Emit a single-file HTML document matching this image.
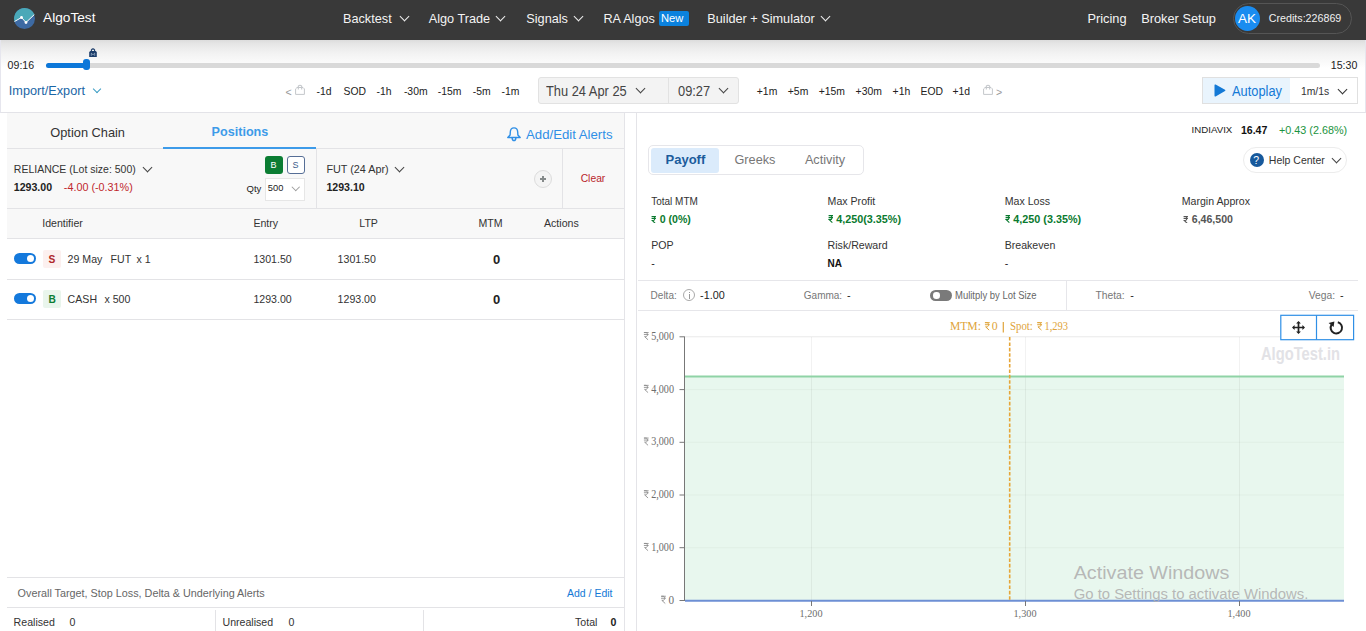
<!DOCTYPE html>
<html><head><meta charset="utf-8">
<style>
*{box-sizing:border-box;margin:0;padding:0}
html,body{width:1366px;height:631px;overflow:hidden;background:#fff;font-family:"Liberation Sans",sans-serif;color:#222}
.t{position:absolute;white-space:nowrap;line-height:1}
.b{position:absolute}
#hdr{position:absolute;left:0;top:0;width:1366px;height:40px;background:#393939}
.nav{font-size:12.7px;color:#f4f4f4}
.ch{position:absolute;width:7px;height:7px;border-right:1.4px solid currentColor;border-bottom:1.4px solid currentColor;transform:rotate(45deg)}
.s{font-size:10.6px}
.rp{display:inline-block;width:.52em;height:.72em;vertical-align:baseline;margin-right:0}
</style></head><body>
<!-- HEADER -->
<div id="hdr">
  <svg class="b" style="left:14px;top:8px" width="21" height="21" viewBox="0 0 21 21">
    <circle cx="10.5" cy="10.5" r="10.5" fill="#3d6aa3"/>
    <path d="M10.5 0 A10.5 10.5 0 0 1 20.3 6.6 L12 14.5 L7.5 9.5 L0.5 13.5 A10.5 10.5 0 0 1 10.5 0Z" fill="#4aa8b8"/>
    <polyline points="0.5,13.5 7.5,9.5 12,14.5 20.3,6.6" fill="none" stroke="#fff" stroke-width="1"/>
    <circle cx="7.5" cy="9.5" r="1.4" fill="#fff"/><circle cx="12" cy="14.5" r="1.4" fill="#fff"/>
  </svg>
  <div class="t" style="left:43px;top:10.7px;font-size:13.7px;color:#fff">AlgoTest</div>
  <div class="t nav" style="left:343px;top:13px">Backtest</div><div class="ch" style="left:400.5px;top:12.5px;color:#eee"></div>
  <div class="t nav" style="left:428.7px;top:13px">Algo Trade</div><div class="ch" style="left:497px;top:12.5px;color:#eee"></div>
  <div class="t nav" style="left:526.3px;top:13px">Signals</div><div class="ch" style="left:574.5px;top:12.5px;color:#eee"></div>
  <div class="t nav" style="left:603.4px;top:13px">RA Algos</div>
  <div class="b" style="left:659px;top:11px;width:30px;height:15px;background:#0b82de;border-radius:2px"></div>
  <div class="t" style="left:661px;top:12.6px;font-size:11.2px;color:#fff">New</div>
  <div class="t nav" style="left:707.3px;top:13px">Builder + Simulator</div><div class="ch" style="left:822px;top:12.5px;color:#eee"></div>
  <div class="t nav" style="left:1087.4px;top:12.6px;font-size:12.8px">Pricing</div>
  <div class="t nav" style="left:1141.2px;top:12.6px;font-size:12.8px">Broker Setup</div>
  <div class="b" style="left:1232.5px;top:3px;width:119px;height:31px;border:1px solid #555;border-radius:16px"></div>
  <div class="b" style="left:1234.5px;top:6px;width:25px;height:25px;background:#1a8cf0;border-radius:50%"></div>
  <div class="t" style="left:1238px;top:12.2px;font-size:13.5px;color:#fff">AK</div>
  <div class="t" style="left:1268.8px;top:12.8px;font-size:10.7px;color:#f0f0f0">Credits:226869</div>
</div>

<!-- TOP CONTROL PANEL -->
<div class="b" style="left:0;top:40px;width:1366px;height:73px;border-left:1px solid #e6e6ee;border-right:1px solid #e6e6ee;border-bottom:1px solid #e3e3e8;background:linear-gradient(#dcdcdc 0px,#e6e6e6 4px,#ededed 9px,#f3f3f3 14px,#f8f8f8 20px,#fcfcfc 25px,#fff 28px)"></div>
<div class="t s" style="left:7.6px;top:59.8px">09:16</div>
<div class="b" style="left:46px;top:62.7px;width:1274px;height:5px;background:#d9d9d9;border-radius:3px"></div>
<div class="b" style="left:46px;top:62.7px;width:40px;height:5px;background:#0c77d9;border-radius:3px"></div>
<div class="b" style="left:82.6px;top:59px;width:7.4px;height:11px;background:#0c77d9;border-radius:3px"></div>
<svg class="b" style="left:89px;top:47.6px" width="8" height="9" viewBox="0 0 8 9"><path d="M0.2 9V4L1.4 3H6.6L7.8 4V9Z" fill="#1c3d6a"/><path d="M2.4 3.4V1.8Q4 0 5.6 1.8V3.4" fill="none" stroke="#1c3d6a" stroke-width="1.1"/><path d="M2.3 7.8V5.2L4 6.8 5.7 5.2V7.8" fill="none" stroke="#a9bcd0" stroke-width=".7"/></svg>
<div class="t s" style="left:1330.8px;top:59.9px">15:30</div>

<div class="t" style="left:8.8px;top:85px;font-size:12.7px;color:#1a66a6">Import/Export</div>
<div class="ch" style="left:94px;top:85.5px;width:6px;height:6px;border-width:0 1.1px 1.1px 0;color:#3b9cc4"></div>

<div class="t s" style="left:285.5px;top:86.8px;color:#999">&lt;</div>
<svg class="b" style="left:295px;top:84.2px" width="10" height="11" viewBox="0 0 10 11"><path d="M0.6 10.4V4.9L2 3.5H8L9.4 4.9V10.4Z" fill="none" stroke="#c4c7cb" stroke-width="1"/><path d="M3.3 5.4V2.2Q5 0.3 6.7 2.2V5.4" fill="none" stroke="#c4c7cb" stroke-width="1.1"/></svg>
<div class="t" style="left:316.6px;top:86.8px;font-size:10.4px">-1d</div>
<div class="t" style="left:343.5px;top:86.8px;font-size:10.4px">SOD</div>
<div class="t" style="left:376.6px;top:86.8px;font-size:10.4px">-1h</div>
<div class="t" style="left:403.9px;top:86.8px;font-size:10.4px">-30m</div>
<div class="t" style="left:437.8px;top:86.8px;font-size:10.4px">-15m</div>
<div class="t" style="left:472.7px;top:86.8px;font-size:10.4px">-5m</div>
<div class="t" style="left:501.5px;top:86.8px;font-size:10.4px">-1m</div>

<div class="b" style="left:538px;top:77px;width:201px;height:27px;background:#f3f3f3;border:1px solid #e2e2e2;border-radius:3px"></div>
<div class="b" style="left:667.5px;top:78px;width:1px;height:25px;background:#e2e2e2"></div>
<div class="t" style="left:546.3px;top:85.3px;font-size:13.9px;color:#444;transform:scaleX(0.925);transform-origin:0 0">Thu 24 Apr 25</div>
<div class="ch" style="left:636.5px;top:85px;color:#444;border-width:0 1.3px 1.3px 0"></div>
<div class="t" style="left:678.2px;top:85.3px;font-size:13.9px;color:#444;transform:scaleX(0.925);transform-origin:0 0">09:27</div>
<div class="ch" style="left:720.2px;top:85px;color:#444;border-width:0 1.3px 1.3px 0"></div>

<div class="t" style="left:756.8px;top:86.8px;font-size:10.4px">+1m</div>
<div class="t" style="left:787.8px;top:86.8px;font-size:10.4px">+5m</div>
<div class="t" style="left:818.7px;top:86.8px;font-size:10.4px">+15m</div>
<div class="t" style="left:855.6px;top:86.8px;font-size:10.4px">+30m</div>
<div class="t" style="left:892.6px;top:86.8px;font-size:10.4px">+1h</div>
<div class="t" style="left:920.5px;top:86.8px;font-size:10.4px">EOD</div>
<div class="t" style="left:952.5px;top:86.8px;font-size:10.4px">+1d</div>
<svg class="b" style="left:983px;top:84.2px" width="10" height="11" viewBox="0 0 10 11"><path d="M0.6 10.4V4.9L2 3.5H8L9.4 4.9V10.4Z" fill="none" stroke="#c4c7cb" stroke-width="1"/><path d="M3.3 5.4V2.2Q5 0.3 6.7 2.2V5.4" fill="none" stroke="#c4c7cb" stroke-width="1.1"/></svg>
<div class="t s" style="left:996px;top:86.8px;color:#999">&gt;</div>

<div class="b" style="left:1202px;top:77px;width:156px;height:27px;border:1px solid #e0e0e0;background:#fff"></div>
<div class="b" style="left:1203px;top:78px;width:87px;height:25px;background:#e9f4fd"></div>
<svg class="b" style="left:1212.7px;top:84.3px" width="13" height="13" viewBox="0 0 13 13"><path d="M1.5 1.2Q1.5 0 2.6 .6L12 5.7Q13 6.4 12 7.1L2.6 12.4Q1.5 13 1.5 11.8Z" fill="#1479d6"/></svg>
<div class="t" style="left:1232.2px;top:85.1px;font-size:13.8px;color:#1479d6;transform:scaleX(0.93);transform-origin:0 0">Autoplay</div>
<div class="t" style="left:1300.9px;top:87px;font-size:10.4px;color:#333">1m/1s</div>
<div class="ch" style="left:1338.5px;top:85.5px;color:#333;border-width:0 1.2px 1.2px 0"></div>

<!-- LEFT PANEL -->
<div class="b" style="left:7px;top:113px;width:617.5px;height:518px;border-right:1px solid #e4e4e8;background:#fff"></div>
<div class="b" style="left:7px;top:113px;width:617px;height:35.5px;background:#f8f8f8;border-bottom:1px solid #e3e3e6"></div>
<div class="b" style="left:163px;top:146.6px;width:153px;height:2px;background:#3d9be9"></div>
<div class="t" style="left:50.3px;top:127px;font-size:12.8px;color:#333">Option Chain</div>
<div class="t" style="left:211.6px;top:126px;font-size:12.6px;font-weight:bold;color:#3d9be9">Positions</div>
<svg class="b" style="left:507px;top:127px" width="15" height="15" viewBox="0 0 15 15"><path d="M7 0.9C4.6 0.9 3.4 2.6 3.3 5L3.1 8.1L0.8 10.5H13.2L10.9 8.1L10.7 5C10.6 2.6 9.4 0.9 7 0.9Z" fill="none" stroke="#2f8fe6" stroke-width="1.4" stroke-linejoin="round"/><path d="M5.1 10.9Q5.3 13.6 7 13.6Q8.7 13.6 8.9 10.9" fill="none" stroke="#2f8fe6" stroke-width="1.4"/></svg>
<div class="t" style="left:526px;top:127.7px;font-size:13.2px;color:#2f8fe6">Add/Edit Alerts</div>

<div class="b" style="left:7px;top:148.5px;width:617px;height:60px;background:#f8f8f8;border-bottom:1px solid #e3e3e6"></div>
<div class="b" style="left:316px;top:149px;width:1px;height:59px;background:#e3e3e6"></div>
<div class="b" style="left:562px;top:149px;width:1px;height:59px;background:#e3e3e6"></div>
<div class="t" style="left:13.8px;top:163.6px;font-size:10.5px;color:#333">RELIANCE (Lot size: 500)</div>
<div class="ch" style="left:143.5px;top:163.5px;color:#444;border-width:0 1.3px 1.3px 0"></div>
<div class="t" style="left:13.8px;top:182px;font-size:10.6px;font-weight:bold;color:#222">1293.00</div>
<div class="t" style="left:63.8px;top:182px;font-size:10.8px;color:#c0282d">-4.00 (-0.31%)</div>
<div class="b" style="left:265px;top:156px;width:18px;height:18px;background:#0b7d33;border-radius:3px"></div>
<div class="t" style="left:270.5px;top:160.5px;font-size:9px;color:#fff">B</div>
<div class="b" style="left:287px;top:156px;width:18px;height:18px;border:1px solid #566e96;border-radius:3px;background:#fff"></div>
<div class="t" style="left:292.5px;top:160.5px;font-size:9px;color:#3a5a8a">S</div>
<div class="t" style="left:246.5px;top:184.1px;font-size:9.5px;color:#222">Qty</div>
<div class="b" style="left:265px;top:178px;width:39.5px;height:22.5px;background:#fff;border:1px solid #e6e6e6"></div>
<div class="t" style="left:267.8px;top:184.1px;font-size:9.3px;color:#222">500</div>
<div class="ch" style="left:293px;top:184.2px;width:5.5px;height:5.5px;color:#999;border-width:0 1px 1px 0"></div>
<div class="t" style="left:326.4px;top:163.6px;font-size:10.8px;color:#333">FUT (24 Apr)</div>
<div class="ch" style="left:396px;top:163.5px;color:#444;border-width:0 1.3px 1.3px 0"></div>
<div class="t" style="left:326.4px;top:181.5px;font-size:10.6px;font-weight:bold;color:#222">1293.10</div>
<div class="b" style="left:534px;top:169.7px;width:18px;height:18px;border:1px solid #dcdcdc;border-radius:50%;background:#f4f4f4"></div>
<div class="b" style="left:539.9px;top:178.2px;width:6px;height:1.5px;background:#858a8a"></div>
<div class="b" style="left:542.2px;top:175.9px;width:1.5px;height:6px;background:#858a8a"></div>
<div class="t" style="left:580.7px;top:174px;font-size:10.3px;color:#b8262c">Clear</div>

<div class="b" style="left:7px;top:208.5px;width:617px;height:30px;background:#f8f8f8;border-bottom:1px solid #e3e3e6"></div>
<div class="t s" style="left:42.2px;top:218px;color:#333">Identifier</div>
<div class="t s" style="left:253.4px;top:218px;color:#333">Entry</div>
<div class="t s" style="left:359.3px;top:218px;color:#333">LTP</div>
<div class="t s" style="left:478.4px;top:218px;color:#333">MTM</div>
<div class="t s" style="left:544px;top:218px;color:#333">Actions</div>

<div class="b" style="left:7px;top:278.5px;width:617px;height:1px;background:#e3e3e6"></div>
<div class="b" style="left:7px;top:318.5px;width:617px;height:1px;background:#e3e3e6"></div>
<div class="b" style="left:13.8px;top:253px;width:22.2px;height:11px;background:#1479dc;border-radius:6px"></div>
<div class="b" style="left:27px;top:255px;width:7px;height:7px;background:#fff;border-radius:50%"></div>
<div class="b" style="left:42.8px;top:250px;width:18.2px;height:17.8px;background:#fcf0ef;border-radius:2px"></div>
<div class="t" style="left:48.4px;top:255.2px;font-size:10.2px;font-weight:bold;color:#b0262a">S</div>
<div class="t s" style="left:67.6px;top:253.8px;color:#333">29 May</div>
<div class="t s" style="left:110.6px;top:253.8px;color:#333">FUT</div>
<div class="t s" style="left:136.4px;top:253.8px;color:#333">x 1</div>
<div class="t s" style="left:253.4px;top:253.8px;color:#333">1301.50</div>
<div class="t s" style="left:337.6px;top:253.8px;color:#333">1301.50</div>
<div class="t" style="left:493px;top:252.8px;font-size:13px;font-weight:bold;color:#222">0</div>

<div class="b" style="left:13.8px;top:293px;width:22.2px;height:11px;background:#1479dc;border-radius:6px"></div>
<div class="b" style="left:27px;top:295px;width:7px;height:7px;background:#fff;border-radius:50%"></div>
<div class="b" style="left:42.8px;top:290px;width:18.2px;height:17.8px;background:#e9f5ec;border-radius:2px"></div>
<div class="t" style="left:48.4px;top:295.2px;font-size:10.2px;font-weight:bold;color:#0b7d33">B</div>
<div class="t s" style="left:67.6px;top:293.8px;color:#333">CASH</div>
<div class="t s" style="left:104.4px;top:293.8px;color:#333">x 500</div>
<div class="t s" style="left:253.4px;top:293.8px;color:#333">1293.00</div>
<div class="t s" style="left:337.6px;top:293.8px;color:#333">1293.00</div>
<div class="t" style="left:493px;top:292.8px;font-size:13px;font-weight:bold;color:#222">0</div>

<div class="b" style="left:7px;top:577px;width:617px;height:1px;background:#e3e3e6"></div>
<div class="t" style="left:17.6px;top:588px;font-size:10.8px;color:#666">Overall Target, Stop Loss, Delta &amp; Underlying Alerts</div>
<div class="t" style="left:567px;top:588px;font-size:10.5px;color:#1479d6">Add / Edit</div>
<div class="b" style="left:7px;top:606.6px;width:617px;height:1px;background:#e3e3e6"></div>
<div class="t s" style="left:13.6px;top:617px;color:#333">Realised</div>
<div class="t s" style="left:69.6px;top:617px;color:#333">0</div>
<div class="b" style="left:215px;top:610px;width:1px;height:21px;background:#e3e3e6"></div>
<div class="t s" style="left:222.5px;top:617px;color:#333">Unrealised</div>
<div class="t s" style="left:288.6px;top:617px;color:#333">0</div>
<div class="b" style="left:423px;top:610px;width:1px;height:21px;background:#e3e3e6"></div>
<div class="t s" style="left:575px;top:617px;color:#333">Total</div>
<div class="t s" style="left:610.6px;top:617px;font-weight:bold;color:#222">0</div>

<!-- RIGHT PANEL -->
<div class="b" style="left:635.6px;top:113px;width:723.4px;height:518px;border-left:1px solid #e4e4e8;background:#fff"></div>
<div class="t" style="left:1191.6px;top:125.2px;font-size:9.7px;color:#222">INDIAVIX</div>
<div class="t" style="left:1240.9px;top:124.9px;font-size:10.6px;font-weight:bold;color:#111">16.47</div>
<div class="t" style="left:1279px;top:124.8px;font-size:10.8px;color:#1a9340">+0.43 (2.68%)</div>

<div class="b" style="left:648.4px;top:145.3px;width:215.3px;height:30px;border:1px solid #e6e6ea;border-radius:5px;background:#fff"></div>
<div class="b" style="left:650.8px;top:147.8px;width:68.3px;height:25.1px;background:#dbebfb;border-radius:3px"></div>
<div class="t" style="left:665.5px;top:152.6px;font-size:13px;font-weight:bold;color:#1b5c9c">Payoff</div>
<div class="t" style="left:734.5px;top:153.7px;font-size:12.7px;color:#777">Greeks</div>
<div class="t" style="left:804.9px;top:153.7px;font-size:12.7px;color:#777">Activity</div>

<div class="b" style="left:1243.3px;top:147.3px;width:104.2px;height:26.2px;border:1px solid #ececec;border-radius:13px;background:#fff"></div>
<div class="b" style="left:1249.8px;top:153px;width:14px;height:14px;border-radius:50%;background:#17599c"></div>
<div class="t" style="left:1253.3px;top:154.5px;font-size:10.5px;color:#fff">?</div>
<div class="t" style="left:1268.8px;top:154.6px;font-size:10.5px;color:#333">Help Center</div>
<div class="ch" style="left:1332.5px;top:155px;color:#444;border-width:0 1.3px 1.3px 0"></div>

<div class="t" style="left:651.2px;top:196.6px;font-size:10px;color:#333">Total MTM</div>
<div class="t s" style="left:827.6px;top:196.3px;color:#333">Max Profit</div>
<div class="t s" style="left:1004.7px;top:196.3px;color:#333">Max Loss</div>
<div class="t s" style="left:1181.7px;top:196.3px;color:#333">Margin Approx</div>
<div class="t" style="left:651.2px;top:214.2px;font-size:10.6px;font-weight:bold;color:#0a7a2f"><svg class="rp" viewBox="0 0 10 14"><path d="M1 1.2H9M1 4.7H9M1.5 1.2H4.2C8 1.2 8 8.3 4.2 8.3H2.2L7.8 13.6" fill="none" stroke="currentColor" stroke-width="2"/></svg> 0 (0%)</div>
<div class="t" style="left:827.6px;top:213.7px;font-size:10.8px;font-weight:bold;color:#0a7a2f"><svg class="rp" viewBox="0 0 10 14"><path d="M1 1.2H9M1 4.7H9M1.5 1.2H4.2C8 1.2 8 8.3 4.2 8.3H2.2L7.8 13.6" fill="none" stroke="currentColor" stroke-width="2"/></svg> 4,250(3.35%)</div>
<div class="t" style="left:1004.7px;top:213.7px;font-size:10.8px;font-weight:bold;color:#0a7a2f"><svg class="rp" viewBox="0 0 10 14"><path d="M1 1.2H9M1 4.7H9M1.5 1.2H4.2C8 1.2 8 8.3 4.2 8.3H2.2L7.8 13.6" fill="none" stroke="currentColor" stroke-width="2"/></svg> 4,250 (3.35%)</div>
<div class="t" style="left:1183.3px;top:214.2px;font-size:10.6px;font-weight:bold;color:#555"><svg class="rp" viewBox="0 0 10 14"><path d="M1 1.2H9M1 4.7H9M1.5 1.2H4.2C8 1.2 8 8.3 4.2 8.3H2.2L7.8 13.6" fill="none" stroke="currentColor" stroke-width="2"/></svg> 6,46,500</div>

<div class="t s" style="left:651.2px;top:239.5px;color:#333">POP</div>
<div class="t s" style="left:827.6px;top:239.5px;color:#333">Risk/Reward</div>
<div class="t s" style="left:1004.7px;top:239.5px;color:#333">Breakeven</div>
<div class="t s" style="left:651.2px;top:257.5px;color:#222">-</div>
<div class="t" style="left:827.6px;top:258.5px;font-size:10px;font-weight:bold;color:#111">NA</div>
<div class="t s" style="left:1004.7px;top:257.5px;color:#222">-</div>

<div class="b" style="left:637.5px;top:280px;width:720.5px;height:1px;background:#e6e6ea"></div>
<div class="b" style="left:637.5px;top:310px;width:720.5px;height:1px;background:#e6e6ea"></div>
<div class="b" style="left:1066px;top:281px;width:1px;height:29px;background:#e6e6ea"></div>
<div class="t" style="left:650.6px;top:291px;font-size:10px;color:#777">Delta:</div>
<div class="b" style="left:683.1px;top:289px;width:12px;height:12px;border:1px solid #aaa;border-radius:50%"></div>
<div class="b" style="left:688.6px;top:291.5px;width:1px;height:1px;background:#999"></div>
<div class="b" style="left:688.6px;top:293.5px;width:1px;height:5px;background:#999"></div>
<div class="t" style="left:700.1px;top:290px;font-size:10.8px;color:#222">-1.00</div>
<div class="t" style="left:803.8px;top:291px;font-size:10px;color:#777">Gamma:</div>
<div class="t" style="left:846.9px;top:290px;font-size:10.8px;color:#222">-</div>
<div class="b" style="left:930px;top:290.2px;width:22px;height:10.5px;border-radius:6px;background:#7a7a7a"></div>
<div class="b" style="left:933px;top:292.2px;width:6.5px;height:6.5px;border-radius:50%;background:#fff"></div>
<div class="t" style="left:954.8px;top:291.2px;font-size:10.2px;color:#666;transform:scaleX(0.93);transform-origin:0 0">Mulitply by Lot Size</div>
<div class="t" style="left:1095.5px;top:291px;font-size:10.3px;color:#777">Theta:</div>
<div class="t" style="left:1130.3px;top:290px;font-size:10.8px;color:#222">-</div>
<div class="t" style="left:1308.7px;top:291px;font-size:10.3px;color:#777">Vega:</div>
<div class="t" style="left:1340px;top:290px;font-size:10.8px;color:#222">-</div>

<!-- CHART -->
<svg class="b" style="left:0;top:0" width="1366" height="631" viewBox="0 0 1366 631">
<rect x="685" y="377" width="659" height="223.6" fill="#e8f7ee"/>
<g stroke="#e9e9e9" stroke-width="1"><path d="M685 336.8H1280"/><path d="M685 389.6H1344M685 442.3H1344M685 495.0H1344M685 547.7H1344" stroke="#e0efe5"/>
<path d="M811.5 337V600M1025.5 337V600M1239.5 337V600" stroke="#000" stroke-opacity="0.05"/></g>
<path d="M685 376.6H1344" stroke="#8fd3a6" stroke-width="2"/>
<path d="M684.5 336.5V601" stroke="#777" stroke-width="1"/>
<path d="M679.5 336.8H684.5M679.5 389.6H684.5M679.5 442.3H684.5M679.5 495.0H684.5M679.5 547.7H684.5M679.5 600.5H684.5" stroke="#777" stroke-width="1"/>
<path d="M685 600.8H1344" stroke="#6d8fd4" stroke-width="2"/>
<path d="M811.5 601V606M1025.5 601V606M1239.5 601V606" stroke="#777" stroke-width="1"/>
<path d="M1009.7 337V600" stroke="#e6a536" stroke-width="1.6" stroke-dasharray="3.6,1.8"/>
<text x="674" y="339.8" font-family="Liberation Serif" font-size="11.6" fill="#6e6e6e" text-anchor="end" textLength="22.8" lengthAdjust="spacingAndGlyphs">5,000</text>
<path d="M643.88 332.56H648.61M643.88 334.56H648.61M644.16 332.56H645.83C648.06 332.56 648.06 336.62 645.83 336.62H644.60L648.06 339.80" fill="none" stroke="#888" stroke-width="0.85"/>
<text x="674" y="392.6" font-family="Liberation Serif" font-size="11.6" fill="#6e6e6e" text-anchor="end" textLength="22.8" lengthAdjust="spacingAndGlyphs">4,000</text>
<path d="M643.88 385.36H648.61M643.88 387.36H648.61M644.16 385.36H645.83C648.06 385.36 648.06 389.42 645.83 389.42H644.60L648.06 392.60" fill="none" stroke="#888" stroke-width="0.85"/>
<text x="674" y="445.3" font-family="Liberation Serif" font-size="11.6" fill="#6e6e6e" text-anchor="end" textLength="22.8" lengthAdjust="spacingAndGlyphs">3,000</text>
<path d="M643.88 438.06H648.61M643.88 440.06H648.61M644.16 438.06H645.83C648.06 438.06 648.06 442.12 645.83 442.12H644.60L648.06 445.30" fill="none" stroke="#888" stroke-width="0.85"/>
<text x="674" y="498.0" font-family="Liberation Serif" font-size="11.6" fill="#6e6e6e" text-anchor="end" textLength="22.8" lengthAdjust="spacingAndGlyphs">2,000</text>
<path d="M643.88 490.76H648.61M643.88 492.76H648.61M644.16 490.76H645.83C648.06 490.76 648.06 494.82 645.83 494.82H644.60L648.06 498.00" fill="none" stroke="#888" stroke-width="0.85"/>
<text x="674" y="550.7" font-family="Liberation Serif" font-size="11.6" fill="#6e6e6e" text-anchor="end" textLength="22.8" lengthAdjust="spacingAndGlyphs">1,000</text>
<path d="M643.88 543.46H648.61M643.88 545.46H648.61M644.16 543.46H645.83C648.06 543.46 648.06 547.52 645.83 547.52H644.60L648.06 550.70" fill="none" stroke="#888" stroke-width="0.85"/>
<text x="674" y="603.5" font-family="Liberation Serif" font-size="11.6" fill="#6e6e6e" text-anchor="end" textLength="5.6" lengthAdjust="spacingAndGlyphs">0</text>
<path d="M661.08 596.26H665.81M661.08 598.26H665.81M661.36 596.26H663.03C665.26 596.26 665.26 600.32 663.03 600.32H661.80L665.26 603.50" fill="none" stroke="#888" stroke-width="0.85"/>
<text x="811" y="617.4" font-family="Liberation Serif" font-size="11.2" fill="#6e6e6e" text-anchor="middle" textLength="23" lengthAdjust="spacingAndGlyphs">1,200</text>
<text x="1025" y="617.4" font-family="Liberation Serif" font-size="11.2" fill="#6e6e6e" text-anchor="middle" textLength="23" lengthAdjust="spacingAndGlyphs">1,300</text>
<text x="1239" y="617.4" font-family="Liberation Serif" font-size="11.2" fill="#6e6e6e" text-anchor="middle" textLength="23" lengthAdjust="spacingAndGlyphs">1,400</text>
<g font-family="Liberation Serif" font-size="11.8" fill="#e0a43a">
<text x="949.9" y="330.1" textLength="31" lengthAdjust="spacingAndGlyphs">MTM:</text>
<path d="M984.89 322.67H989.74M984.89 324.73H989.74M985.17 322.67H986.89C989.17 322.67 989.17 326.84 986.89 326.84H985.63L989.17 330.10" fill="none" stroke="#e0a43a" stroke-width="1.0"/>
<text x="991.8" y="330.1">0</text>
<path d="M1003.3 322V332.5" stroke="#e0a43a" stroke-width="1.2"/>
<text x="1010" y="330.1" textLength="22.8" lengthAdjust="spacingAndGlyphs">Spot:</text>
<path d="M1037.19 322.67H1042.04M1037.19 324.73H1042.04M1037.47 322.67H1039.19C1041.47 322.67 1041.47 326.84 1039.19 326.84H1037.93L1041.47 330.10" fill="none" stroke="#e0a43a" stroke-width="1.0"/>
<text x="1044.5" y="330.1" textLength="23.6" lengthAdjust="spacingAndGlyphs">1,293</text>
</g>
<text x="1261" y="359.6" font-family="Liberation Sans" font-weight="bold" font-size="19" fill="#e2e2e6" textLength="79" lengthAdjust="spacingAndGlyphs">AlgoTest.in</text>
<rect x="1280.8" y="315.3" width="72.8" height="24.4" fill="#fff" stroke="#2f8fe6" stroke-width="1.2"/>
<path d="M1316.5 315.3V339.7" stroke="#2f8fe6" stroke-width="1.2"/>
<g fill="#222" stroke="#222"><path d="M1298.5 322.5V332.5M1293 327.5H1304" stroke-width="1.7"/>
<path d="M1298.5 321l-2.4 2.6h4.8zM1298.5 334l-2.4-2.6h4.8zM1292 327.5l2.6-2.4v4.8zM1305 327.5l-2.6-2.4v4.8z" stroke="none"/></g>
<path d="M1337.8 322.2A5.7 5.7 0 1 1 1331.6 324.6" fill="none" stroke="#222" stroke-width="2"/>
<path d="M1328.6 322.9L1334.4 321.6L1333.6 327Z" fill="#222"/>
<g fill="#b0b0b0" fill-opacity="0.9" font-family="Liberation Sans">
<text x="1073.7" y="578.8" font-size="18.3" textLength="155.7" lengthAdjust="spacingAndGlyphs">Activate Windows</text>
<text x="1073.7" y="599.2" font-size="14" textLength="234.7" lengthAdjust="spacingAndGlyphs">Go to Settings to activate Windows.</text></g>
</svg>
<!--CHARTEND-->

</body></html>
